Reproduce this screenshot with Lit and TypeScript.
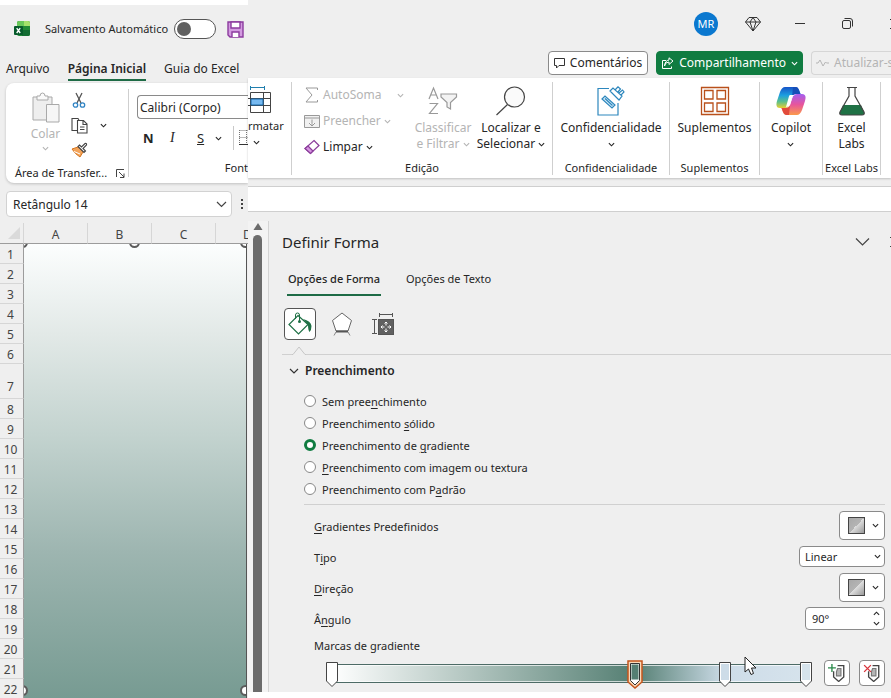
import { LitElement, html, css, svg } from "lit";
import { customElement, state } from "lit/decorators.js";
import { styleMap } from "lit/directives/style-map.js";
import { classMap } from "lit/directives/class-map.js";

const base = css`
  * { box-sizing: border-box; }
  :host { font-family: "Noto Sans", "Open Sans", sans-serif; font-size: 12px; line-height: 16px; color: #262626; }
  button, input, select { font: inherit; color: inherit; margin: 0; }
  button { display: inline-flex; align-items: center; justify-content: center; padding: 0; border: 0; background: none; white-space: nowrap; }
  button:disabled { color: #b4b4b4; }
  svg { display: block; flex: none; fill: none; }
`;

const chevron = (w = 7) => svg`<svg width=${w} height=${w} viewBox="0 0 8 8" stroke="currentColor" stroke-width="1.3"><path d="M1 2.5 4 5.5 7 2.5"/></svg>`;

@customElement("sheet-side")
class SheetSide extends LitElement {
  static styles = [base, css`
    :host { display: flex; flex-direction: column; min-width: 0; overflow: hidden; background: #efefef; border-top: 5px solid #fff; }
    .title { display: flex; align-items: center; justify-content: space-between; height: 48px; padding: 0 4px 0 14px; font-size: 11px; flex: none; }
    .title label { display: flex; align-items: center; gap: 6px; margin-left: 4px; white-space: nowrap; }
    .switch { appearance: none; width: 42px; height: 20px; border: 1px solid #555; border-radius: 10px; background: #fff; display: flex; align-items: center; padding: 0 2px; }
    .switch::before { content: ""; width: 14px; height: 14px; border-radius: 7px; background: #606060; }
    .tabs { display: flex; height: 30px; padding: 6px 4px 2px 6px; gap: 18px; flex: none; }
    .tab { height: 22px; align-items: flex-start; padding-top: 2px; border-bottom: 2px solid transparent; }
    .tab.on { font-weight: 600; border-color: #1e6b46; }
    .card { display: flex; height: 100px; margin-left: 6px; padding: 6px 0; background: #fff; border-radius: 8px 0 0 8px; box-shadow: 0 1px 3px #0003; flex: none; }
    .clip { width: 123px; display: grid; grid-template: 76px 1fr / 58px 1fr; padding-left: 7px; border-right: 1px solid #cfcfcf; }
    .paste { flex-direction: column; justify-content: flex-start; gap: 3px; padding: 3px 0 0 7px; }
    .tools { display: flex; flex-direction: column; align-items: flex-start; gap: 7px; padding: 2px 0 0 0; }
    .tools button { gap: 12px; height: 18px; }
    .foot { grid-column: 1 / 3; display: flex; align-items: center; justify-content: space-between; padding: 0 3px 4px 2px; font-size: 11px; white-space: nowrap; }
    .fonts { flex: 1; display: flex; flex-direction: column; min-width: 0; padding: 6px 0 0 8px; }
    .combo { width: 100%; height: 24px; border: 1px solid #8a8a8a; border-right: 0; border-radius: 4px 0 0 4px; padding: 0 2px; background: #fff; }
    .fmt { display: flex; align-items: center; height: 24px; margin-top: 7px; font-size: 13px; padding-left: 6px; }
    .fmt button { width: 27px; justify-content: flex-start; flex: none; }
    .fmt .more { width: 18px; }
    .rule { width: 1px; height: 24px; background: #c8c8c8; margin: 0 5px 0 0; flex: none; }
    .fmt .b { font-weight: 700; } .i { font-style: italic; font-family: "Liberation Serif", serif; font-size: 14px; } .u { text-decoration: underline; }
    .fontfoot { margin-top: auto; text-align: right; font-size: 11px; padding-bottom: 1px; }
    .name { display: flex; align-items: center; gap: 9px; height: 40px; padding: 2px 4px 0 6px; flex: none; }
    .box { position: relative; flex: 1; display: flex; min-width: 0; }
    .box input { width: 100%; height: 26px; border: 1px solid #d2d2d2; border-radius: 4px; background: #fff; padding: 0 24px 0 6px; }
    .box button { position: absolute; right: 5px; top: 8px; }
    .sheet { position: relative; flex: 1; min-height: 0; overflow: hidden; color: #444; }
    table { width: 280px; table-layout: fixed; border-collapse: separate; border-spacing: 0; }
    th { height: 20px; padding: 0; font-weight: 400; line-height: 16px; border-bottom: 1px solid #d6d6d6; border-right: 1px solid #9c9c9c; vertical-align: bottom; padding-right: 2px; }
    thead th { height: 21px; border-bottom-color: #9c9c9c; border-right-color: #d6d6d6; padding: 0; }
    .corner { width: 24px; }
    .corner svg { margin: 0 0 4px 8px; }
    .tall th { height: 35px; padding-bottom: 3px; }
    .shape { position: absolute; inset: 21px 1px 0 24px; overflow: hidden; border-right: 1px solid #555; background: linear-gradient(#fcfefe, #e2e9e7 20%, #c3d3cf 42%, #9db5b0 68%, #779b92); }
    .dot { position: absolute; width: 11px; height: 11px; border: 2px solid #5c5c5c; border-radius: 6px; background: #fff; }
    .tl { left: -7px; top: -7px; } .tc { left: 50%; margin-left: -6px; top: -7px; } .tr { right: -5px; top: -7px; }
    .bl { left: -7px; bottom: 2px; } .br { right: -5px; bottom: 2px; }
  `];
  render() {
    return html`
      <div class="title">
        <svg width="16" height="16" viewBox="0 0 16 16"><rect x="3" width="13" height="15" rx="2" fill="#218b36"/><path d="M3 2Q3 0 5 0H10V5H3Z" fill="#69c95a"/><path d="M10 0H14Q16 0 16 2V5H10Z" fill="#a5e26b"/><path d="M8 9H16V13Q16 15 14 15H8Z" fill="#126c32"/><rect y="5" width="9" height="9" rx="1" fill="#075b2c"/><path d="m2.7 7.2 3.5 4.8m0-4.8L2.700 12" stroke="#fff" stroke-width="1.4"/></svg>
        <label>Salvamento Automático <input class="switch" type="checkbox" role="switch"></label>
        <button class="save" aria-label="Salvar"><svg width="17" height="17" viewBox="0 0 17 17" stroke="#8c3b9e" stroke-width="1.4"><path d="M1 1H16V16H3L1 14Z" fill="#d39be0"/><path d="M4 1H13V7H4ZM5 16V11H12V16" fill="#fff"/></svg></button>
      </div>
      <nav class="tabs"><button class="tab">Arquivo</button><button class="tab on">Página Inicial</button><button class="tab">Guia do Excel</button></nav>
      <div class="card">
        <div class="clip">
          <button class="paste" disabled>
            <svg width="28" height="31" viewBox="0 0 28 31" stroke="#a9a9a9"><path d="M1 5H20V28H1Z" fill="#eee"/><path d="M5 8V4H8Q8 1 10.500 1T13 4H16V8Z" fill="#fafafa"/><path d="M14.500 12.500H27V30H14.500Z" fill="#f6f6f6"/></svg>
            <span>Colar</span>${chevron()}
          </button>
          <div class="tools">
            <button aria-label="Recortar"><svg width="16" height="17" viewBox="0 0 16 17"><path d="M5 1 10 11M11 1 6 11" stroke="#555" stroke-width="1.300"/><circle cx="4.500" cy="13" r="2.200" stroke="#3184c4" stroke-width="1.300"/><circle cx="11.500" cy="13" r="2.200" stroke="#3184c4" stroke-width="1.300"/></svg></button>
            <button aria-label="Copiar"><svg width="17" height="17" viewBox="0 0 17 17" stroke="#444" stroke-width="1.100"><path d="M6 13.500H1V1.500H7L8 3"/><path d="M6.500 3.500H12.500L16 7V16H6.500ZM12 4V7.500H16M9 10H13.500M9 12.500H13.500"/></svg>${chevron()}</button>
            <button aria-label="Pincel de Formatação"><svg width="17" height="16" viewBox="0 0 17 16"><path d="M1 7 7 5 12 10 9 15Q4 12 1 7Z" fill="#f3a45a" stroke="#d5751f"/><path d="M3 9.500 9 12" stroke="#fff"/><path d="m7 4.500 6 6 1.500-1.500L12 6.500 15.500 3Q16 1 14 1.500L10.500 5 8.500 3Z" fill="#fff" stroke="#444" stroke-width="1.100"/></svg></button>
          </div>
          <div class="foot"><span>Área de Transfer...</span><svg width="9" height="9" viewBox="0 0 9 9" stroke="#444"><path d="M.5 8V.5H8M3 3 8 8M8 4.500V8.500H4"/></svg></div>
        </div>
        <div class="fonts">
          <input class="combo" aria-label="Fonte" value="Calibri (Corpo)">
          <div class="fmt"><button class="b">N</button><button class="i">I</button><button class="u more">S</button><button class="more" aria-label="Mais">${chevron()}</button><i class="rule"></i>
            <svg width="14" height="16" viewBox="0 0 14 16" stroke="#777" stroke-dasharray="1 1"><path d="M.5.5H14M.5 7.500H14M.5 0V15M7.500 0V15"/><path d="M0 14.500H14" stroke="#333" stroke-dasharray="none"/></svg></div>
          <div class="fontfoot">Font</div>
        </div>
      </div>
      <div class="name"><div class="box"><input aria-label="Caixa de nome" value="Retângulo 14"><button aria-label="Abrir nomes"><svg width="11" height="10" viewBox="0 0 11 10" stroke="#444" stroke-width="1.200"><path d="m1 3 4.500 4.500L10 3"/></svg></button></div>
        <svg width="3" height="12" viewBox="0 0 3 12"><path fill="#444" d="M0 1H2V3H0ZM0 5H2V7H0ZM0 9H2V11H0Z"/></svg></div>
      <div class="sheet">
        <table>
          <thead><tr><th class="corner"><svg width="12" height="12" viewBox="0 0 12 12"><path d="M12 0V12H0Z" fill="#dadada"/></svg></th>${["A", "B", "C", "D"].map((c) => html`<th scope="col">${c}</th>`)}</tr></thead>
          <tbody>${Array.from({ length: 22 }, (_, i) => html`<tr class=${classMap({ tall: i === 6 })}><th scope="row">${i + 1}</th></tr>`)}</tbody>
        </table>
        <div class="shape">${["tl", "tc", "tr", "bl", "br"].map((p) => html`<i class="dot ${p}"></i>`)}</div>
      </div>`;
  }
}

@customElement("ribbon-right")
class RibbonRight extends LitElement {
  static styles = [base, css`
    :host { display: block; min-width: 0; background: #efefef; }
    .win { display: flex; height: 47px; align-items: center; justify-content: flex-end; }
    .avatar { width: 24px; height: 24px; border-radius: 12px; background: #0b78cf; color: #fff; font-size: 11px; margin-right: 27px; }
    .win .gem { margin-right: 34px; } .win .min { margin-right: 37px; } .win .max { margin-right: 37px; }
    .close { width: 1px; overflow: hidden; justify-content: flex-start; }
    .acts { display: flex; justify-content: flex-end; gap: 8px; height: 31px; padding-top: 4px; overflow: hidden; }
    .acts button { height: 24px; border: 1px solid #8a8a8a; border-radius: 4px; background: #fff; padding: 0 5px; gap: 5px; flex: none; }
    .acts .share { background: #107c41; color: #fff; border-color: #107c41; padding: 0 4px; }
    .acts .upd { background: none; border-color: #d6d6d6; border-right: 0; border-radius: 4px 0 0 4px; width: 80px; justify-content: flex-start; overflow: hidden; padding: 0 4px; }
    .ribbon { display: flex; height: 100px; padding: 4px 0 3px; background: #fff; box-shadow: 0 1px 2px #0003; overflow: hidden; position: relative; }
    .group { display: flex; flex-direction: column; flex: none; border-right: 1px solid #cfcfcf; }
    .body { display: flex; flex: 1; justify-content: center; align-items: flex-start; padding-top: 4px; }
    .foot { text-align: center; font-size: 11px; white-space: nowrap; line-height: 14px; }
    .big { flex-direction: column; }
    .big svg.art { margin-bottom: 4px; }
    .line { display: flex; align-items: center; gap: 3px; min-height: 16px; font-size: 12px; }
    .small { font-size: 11px; }
    .fmt { width: 44px; } .fmt .body { justify-content: flex-start; }
    .fmt .big { align-items: flex-start; }
    .fmt .chev { padding-left: 5px; }
    .fmt .art { margin-bottom: 6px; }
    .edit { width: 261px; } .conf { width: 117px; } .sup { width: 90px; } .cop { width: 63px; } .labs { width: 58px; }
    .edit .body { justify-content: flex-start; padding-left: 12px; }
    .list { display: flex; flex-direction: column; align-items: flex-start; width: 112px; }
    .list button { height: 26px; gap: 3px; }
    .list button.auto { width: 100px; justify-content: flex-start; height: 18px; margin-bottom: 4px; }
    .auto span { flex: 1; text-align: left; }
    .sort { width: 54px; } .find { width: 74px; margin-left: 4px; }
    .bar { height: 26px; margin-top: 8px; background: #fff; border: 1px solid #cfcfcf; border-left: 0; border-right: 0; }
    .bar input { width: 100%; height: 24px; border: 0; padding: 0 8px; background: none; display: block; outline: 0; }
  `];
  render() {
    return html`
      <div class="win">
        <button class="avatar" aria-label="Conta">MR</button>
        <button class="gem" aria-label="Premium"><svg width="16" height="16" viewBox="0 0 16 16" stroke="#333"><path d="M4 1.500H12L15.500 6 8 15 .5 6ZM.5 6H15.500M8 1.500 5 6 8 15 11 6Z"/></svg></button>
        <button class="min" aria-label="Minimizar"><svg width="10" height="11" viewBox="0 0 10 11" stroke="#333"><path d="M0 5.500H10"/></svg></button>
        <button class="max" aria-label="Restaurar"><svg width="11" height="11" viewBox="0 0 11 11" stroke="#333"><rect x=".5" y="2.500" width="8" height="8" rx="1.500"/><path d="M2.500 .5H8Q10.500 .5 10.500 3V8.500"/></svg></button>
        <button class="close" aria-label="Fechar"><svg width="10" height="10" viewBox="0 0 10 10" stroke="#333"><path d="M0 0 10 10M10 0 0 10"/></svg></button>
      </div>
      <div class="acts">
        <button><svg width="11" height="12" viewBox="0 0 11 12" stroke="#333"><path d="M.5 1.500H10.500V8.500H5L2.500 11V8.500H.5Z"/></svg>Comentários</button>
        <button class="share"><svg width="13" height="13" viewBox="0 0 13 13" stroke="#fff"><path d="M5 3.500H1.500V11.500H10.500V9.500M3.500 9Q4 5 8 5V7.500L12 4 8 .8V3Q4 3.500 3.500 9Z"/></svg>Compartilhamento ${chevron()}</button>
        <button class="upd" disabled><svg width="13" height="10" viewBox="0 0 13 10" stroke="#b4b4b4"><path d="M0 5H2L4 2 7 8 9.500 4 10.500 5H13"/></svg>Atualizar-se</button>
      </div>
      <div class="ribbon">
        <section class="group fmt"><div class="body"><button class="big">
          <svg class="art" width="24" height="28" viewBox="0 0 24 28" stroke="#444"><path d="M2 1.500H17M2.500 0V4M16.500 0V4" stroke="#217fae"/><path d="M2.500 6.500H22.500V26.500H2.500ZM15.500 6.500V26.500M0 12.500H22.500M0 19.500H22.500"/><path d="M3 13H15V19H3Z" fill="#76b9f0" stroke="#1768ab"/></svg>
          <span class="line small">rmatar</span><span class="line chev">${chevron()}</span></button></div></section>
        <section class="group edit"><div class="body">
          <div class="list">
            <button class="auto" disabled><svg width="16" height="16" viewBox="0 0 16 16" stroke="#999"><path d="M13.500 3V1H2L8 8 2 15H13.500V13"/></svg><span>AutoSoma</span>${chevron()}</button>
            <button disabled><svg width="16" height="15" viewBox="0 0 16 15" stroke="#999"><path d="M.5 1.500H15.500V13.500H.5ZM.5 4H15.500M8 5.500V11.500M5 9 8 12 11 9" fill="#f1f1f1"/></svg><span>Preencher</span>${chevron()}</button>
            <button><svg width="16" height="16" viewBox="0 0 16 16" stroke="#8b3d9b" stroke-width="1.200"><path d="M10 1.500 15 6.500 6.500 14.500 1 9.500Z" fill="#fff"/><path d="M4 7 9 12 6.500 14.500 1 9.500Z" fill="#d796e2"/></svg><span>Limpar</span>${chevron()}</button>
          </div>
          <button class="big sort" disabled><svg class="art" width="30" height="30" viewBox="0 0 30 30" stroke="#999" stroke-width="1.200"><path d="M1 13 5.500 2 10 13M2.500 9H8.500M1.500 17.500H9.500L1.500 27.500H10"/><path d="M13 8H28.500V11L22.500 16.500V23L19 21V16.500L13 11Z" fill="#f3f3f3"/></svg><span class="line">Classificar</span><span class="line">e Filtrar ${chevron()}</span></button>
          <button class="big find"><svg class="art" width="30" height="30" viewBox="0 0 30 30" stroke="#444" stroke-width="1.200"><circle cx="18.500" cy="11" r="10" fill="#fafafa"/><path d="M11.500 18.500.5 29"/></svg><span class="line">Localizar e</span><span class="line">Selecionar ${chevron()}</span></button>
        </div><div class="foot">Edição</div></section>
        <section class="group conf"><div class="body"><button class="big">
          <svg class="art" width="28" height="30" viewBox="0 0 28 30" stroke="#2d87bd" stroke-width="1.200"><path d="M12 2.500H1V29H21V17"/><path d="m5 13 3-3 10 9-3 3ZM8 12.500 15.500 19.500" fill="#d6ecfa"/><path d="m13 5 3-3 9 8-3 4ZM18 4 21 .8 23.500 3 20.500 6.500M22 7 25.500 4 27 6 23.500 9.500" fill="#fff"/></svg>
          <span class="line">Confidencialidade</span><span class="line">${chevron()}</span></button></div><div class="foot">Confidencialidade</div></section>
        <section class="group sup"><div class="body"><button class="big">
          <svg class="art" width="30" height="30" viewBox="0 0 30 30" stroke="#b9501b" stroke-width="1.300"><path d="M1.500 1.500H28.500V28.500H1.500ZM4.500 4.500H13V13H4.500ZM17 4.500H25.500V13H17ZM4.500 17H13V25.500H4.500ZM17 17H25.500V25.500H17Z"/></svg>
          <span class="line">Suplementos</span></button></div><div class="foot">Suplementos</div></section>
        <section class="group cop"><div class="body"><button class="big">
          <svg class="art" width="30" height="30" viewBox="0 0 30 30">
            <defs>
              <linearGradient id="a" x1="0" y1="0" x2="0" y2="1"><stop stop-color="#1754c8"/><stop offset=".4" stop-color="#1c9fe0"/><stop offset=".7" stop-color="#5cc08c"/><stop offset="1" stop-color="#e8cf31"/></linearGradient>
              <linearGradient id="b" x1="0" y1="0" x2="0" y2="1"><stop stop-color="#a45ff0"/><stop offset=".5" stop-color="#e7559c"/><stop offset="1" stop-color="#fb9a4a"/></linearGradient>
            </defs>
            <path d="M9 1H20Q22 1 23 4L24.500 8H20Q17 8 16 11L13 20Q12 22 9 22H4Q-1 22 1 15L4 6Q6 1 9 1Z" fill="url(#a)"/>
            <path d="M17 1H20Q22 1 23 4L24.500 8H20Q17 8 16 11Z" fill="#164fb8"/>
            <path d="M21 29H10Q8 29 7 26L5.500 22H10Q13 22 14 19L17 10Q18 8 21 8H26Q31 8 29 15L26 24Q24 29 21 29Z" fill="url(#b)"/>
            <path d="M13 29H10Q8 29 7 26L5.500 22H10Q13 22 14 19Z" fill="#e24b3c"/>
            <path d="M14 9H19Q17 9 16 12L14 19Q13 21 10 21L12.500 12Q13 9 14 9Z" fill="#fff"/>
          </svg>
          <span class="line">Copilot</span><span class="line">${chevron()}</span></button></div></section>
        <section class="group labs"><div class="body"><button class="big">
          <svg class="art" width="26" height="30" viewBox="0 0 26 30"><path d="M4 19H22L25 26Q26 29 23 29H3Q0 29 1 26Z" fill="#1f7145"/><path d="M8 1.500H18M10 1.500V10L1 26Q0 29 3 29H23Q26 29 25 26L16 10V1.500" stroke="#444" stroke-width="1.200"/></svg>
          <span class="line">Excel</span><span class="line">Labs</span></button></div><div class="foot">Excel Labs</div></section>
      </div>
      <div class="bar"><input aria-label="Barra de fórmulas"></div>`;
  }
}

@customElement("format-pane")
class FormatPane extends LitElement {
  @state() private fill = 2;
  private fills = [
    html`Sem pree<u>n</u>chimento`, html`Preenchimento <u>s</u>ólido`, html`Preenchimento de <u>g</u>radiente`,
    html`<u>P</u>reenchimento com imagem ou textura`, html`Preenchimento com P<u>a</u>drão`,
  ];
  private stops = [
    { at: 0, color: "#ffffff" }, { at: 64, color: "#557f73", on: true },
    { at: 83, color: "#cddce8" }, { at: 100, color: "#d6e3ec" },
  ];
  static styles = [base, css`
    :host { display: flex; flex: 1; min-height: 0; background: #efefef; border-bottom: 6px solid #fff; font-size: 11px; }
    .scroll { width: 21px; margin-top: 9px; border-right: 1px solid #d4d4d4; display: flex; flex-direction: column; align-items: center; gap: 5px; padding: 2px 1px 0 0; background: #f3f3f3; flex: none; }
    .thumb { width: 9px; flex: 1; background: #6c6c6c; border-radius: 5px 5px 0 0; }
    .pane { flex: 1; min-width: 0; padding: 19px 0 0 13px; }
    .head { display: flex; align-items: center; height: 22px; }
    h2 { margin: 0; font-size: 15px; line-height: 22px; font-weight: 400; flex: 1; }
    .head .x { width: 1px; overflow: hidden; justify-content: flex-start; margin-left: 20px; }
    .tabs { display: flex; gap: 25px; margin: 13px 0 0 5px; }
    .tabs button { height: 30px; border-bottom: 2px solid transparent; padding-bottom: 2px; }
    .tabs .on { border-color: #1e6b46; font-weight: 500; padding: 0 1px 2px; }
    .cats { display: flex; align-items: center; gap: 15px; margin: 12px 0 0 2px; }
    .cats .size { margin-left: 4px; }
    .cats .on { width: 32px; height: 32px; border: 1px solid #555; border-radius: 4px; background: #fff; }
    .notch { display: flex; align-items: flex-end; height: 15px; }
    .notch::before, .notch::after { content: ""; width: 10px; height: 1px; background: #d0d0d0; }
    .notch::after { flex: 1; }
    .sec { display: flex; align-items: center; gap: 6px; height: 32px; padding-left: 7px; }
    h3 { margin: 0; font-size: 12px; font-weight: 600; }
    .form { padding: 4px 6px 0 22px; }
    fieldset { border: 0; margin: 0; padding: 0 0 3px; border-bottom: 1px solid #d0d0d0; min-width: 0; }
    .radio { display: flex; height: 22px; gap: 6px; align-items: center; }
    .radio input { appearance: none; width: 12px; height: 12px; border: 1px solid #888; border-radius: 6px; background: #fff; flex: none; margin-bottom: 3px; }
    .radio input:checked { border: 3px solid #107c41; }
    u { text-underline-offset: 2px; }
    .row { display: flex; align-items: center; justify-content: space-between; height: 31px; padding-left: 10px; }
    .row label { padding-top: 2px; }
    .rows { padding-top: 5px; }
    .pick { width: 46px; height: 29px; border: 1px solid #8a8a8a; border-radius: 4px; background: #fff; gap: 7px; padding-left: 2px; }
    .sw { width: 17px; height: 17px; border: 1px solid #444; background: linear-gradient(135deg, #a8a8a8, #b4b4b4 50%, #ddd 50%, #999); }
    .field { position: relative; display: flex; }
    .field select { appearance: none; width: 86px; height: 21px; border: 1px solid #8a8a8a; border-radius: 4px; background: #fff; padding: 0 5px; }
    .field .ch { position: absolute; right: 4px; top: 7px; pointer-events: none; }
    .field input { width: 80px; height: 23px; border: 1px solid #8a8a8a; border-radius: 4px; background: #fff; padding: 0 6px; }
    .spin { position: absolute; right: 5px; top: 3px; display: flex; flex-direction: column; gap: 3px; }
    .up { transform: rotate(180deg); }
    .mark { height: 23px; padding-left: 10px; line-height: 24px; }
    .grad { display: flex; align-items: center; gap: 9px; height: 32px; padding-left: 27px; }
    .track { position: relative; flex: 1; height: 19px; margin-right: 8px; border: 1px solid #4d6b66; background: linear-gradient(90deg, #fff, #557f73 64%, #cddce8 83%, #d6e3ec); box-shadow: inset 0 0 0 1px #ffffffb0; }
    .stop { position: absolute; top: -3px; margin-left: -6px; }
    .stop.on { top: -5px; margin-left: -8px; }
    .act { width: 26px; height: 26px; border: 1px solid #8a8a8a; border-radius: 4px; background: #fff; flex: none; }
    .mouse { position: absolute; left: 87%; top: -9px; }
  `];
  private stop(s: { at: number; color: string; on?: boolean }) {
    return s.on
      ? html`<button class="stop on" aria-label="Marca selecionada" style=${styleMap({ left: `${s.at}%` })}><svg width="16" height="29" viewBox="0 0 16 29"><path d="M1 1H15V22L8 28 1 22Z" fill="#f9d9b9" stroke="#c5561c" stroke-width="1.500"/><path d="M3.500 3.500H12.500V20.500L8 25 3.500 20.500Z" fill="#fff" stroke="#333"/><path d="M4.500 4.500H11.500V19.500H4.500Z" fill=${s.color}/></svg></button>`
      : html`<button class="stop" aria-label="Marca de gradiente" style=${styleMap({ left: `${s.at}%` })}><svg width="12" height="25" viewBox="0 0 12 25"><path d="M.5 .5H11.500V19L6 24.500 .5 19Z" fill="#fff" stroke="#444"/><path d="M2 2H10V18H2Z" fill=${s.color}/></svg></button>`;
  }
  render() {
    const tag = svg`<path d="M8.500 1.500H14V11.500L9.500 15.500 5 11.500V6.500" stroke="#444" stroke-width="1.200" fill="#fff"/><path d="M8.500 4H11.500V10.500H7.500V7Z" fill="#b5b5b5" stroke="#777"/>`;
    return html`
      <div class="scroll"><svg width="10" height="7" viewBox="0 0 10 7"><path d="M5 0 9.500 7H.5Z" fill="#6c6c6c"/></svg><div class="thumb"></div></div>
      <div class="pane">
        <div class="head"><h2>Definir Forma</h2><button aria-label="Opções do painel"><svg width="15" height="10" viewBox="0 0 15 10" stroke="#444" stroke-width="1.200"><path d="m1 1.500 6.500 6.500L14 1.500"/></svg></button><button class="x" aria-label="Fechar painel"><svg width="10" height="10" viewBox="0 0 10 10" stroke="#444"><path d="M0 0 10 10M10 0 0 10"/></svg></button></div>
        <div class="tabs"><button class="on">Opções de Forma</button><button>Opções de Texto</button></div>
        <div class="cats">
          <button class="on" aria-label="Preenchimento e Linha"><svg width="24" height="24" viewBox="0 0 24 24"><path d="M10 3.500 20 12.500 10.500 22 1 12.500Z" stroke="#1e7045" stroke-width="1.200"/><path d="M7.500 7V3Q7.500 1 9.500 1T11.500 3V9.500" stroke="#1e7045"/><circle cx="11.500" cy="9.500" r="1.500" fill="#1e7045"/><path d="M15 7Q23 9 23.500 14 23.500 18 21.500 20 20 18 20 13Z" fill="#1e7045"/></svg></button>
          <button aria-label="Efeitos"><svg width="22" height="24" viewBox="0 0 22 24"><path d="M11 1 20.500 8.500 17 19H5L1.500 8.500Z" fill="#fff" stroke="#666"/><path d="M5 19.500H17" stroke="#555" stroke-width="2"/><path d="M5 20 3 23.500M17 20 19 23.500" stroke="#888"/></svg></button>
          <button class="size" aria-label="Tamanho e Propriedades"><svg width="22" height="22" viewBox="0 0 22 22" stroke="#555"><path d="M7 1.500H21M7.500 0V4M20.500 0V4M2.500 7V20.500M0 6.500H5M0 20.500H5"/><rect x="6.500" y="6.500" width="15" height="15" fill="#606060"/><path d="M14 9V12.500M14 15.500V19M9 14H12.500M15.500 14H19M12.500 10.500 14 9 15.500 10.500M12.500 17.500 14 19 15.500 17.500M10.500 12.500 9 14 10.500 15.500M17.500 12.500 19 14 17.500 15.500" stroke="#fff"/></svg></button>
        </div>
        <div class="notch"><svg width="14" height="9" viewBox="0 0 14 9" stroke="#c6c6c6"><path d="M0 8.500H1L7 1 13 8.500H14"/></svg></div>
        <div class="sec"><svg width="10" height="8" viewBox="0 0 10 8" stroke="#333" stroke-width="1.200"><path d="m1 2 4 4 4-4"/></svg><h3>Preenchimento</h3></div>
        <div class="form">
          <fieldset>${this.fills.map((f, i) => html`<label class="radio"><input type="radio" name="fill" .checked=${this.fill === i} @change=${() => (this.fill = i)}><span>${f}</span></label>`)}</fieldset>
          <div class="rows">
            <div class="row"><label for="preset"><u>G</u>radientes Predefinidos</label><button id="preset" class="pick"><i class="sw"></i>${chevron()}</button></div>
            <div class="row"><label for="type">T<u>i</u>po</label><span class="field"><select id="type"><option>Linear</option></select><span class="ch">${chevron()}</span></span></div>
            <div class="row"><label for="dir"><u>D</u>ireção</label><button id="dir" class="pick"><i class="sw"></i>${chevron()}</button></div>
            <div class="row"><label for="angle">Â<u>n</u>gulo</label><span class="field"><input id="angle" value="90°"><span class="spin"><button class="up" aria-label="Aumentar">${chevron()}</button><button aria-label="Diminuir">${chevron()}</button></span></span></div>
          </div>
          <div class="mark">Marcas de gradiente</div>
          <div class="grad">
            <div class="track">${this.stops.map((s) => this.stop(s))}
              <svg class="mouse" width="13" height="20" viewBox="0 0 13 20"><path d="M1 1V16L4.500 13 7 18.500 9.500 17.500 7.500 12H12Z" fill="#fff" stroke="#222"/></svg></div>
            <button class="act" aria-label="Adicionar marca"><svg width="18" height="18" viewBox="0 0 16 16">${tag}<path d="M3.500 0V7M0 3.500H7" stroke="#2b8a4b" stroke-width="1.200"/></svg></button>
            <button class="act" aria-label="Remover marca"><svg width="18" height="18" viewBox="0 0 16 16">${tag}<path d="M1 1 7 7M7 1 1 7" stroke="#d9343c" stroke-width="1.200"/></svg></button>
          </div>
        </div>
      </div>`;
  }
}

@customElement("app-root")
class AppRoot extends LitElement {
  static styles = css`
    :host { display: grid; grid-template-columns: 248px minmax(0, 1fr); height: 100vh; overflow: hidden; }
    .main { display: flex; flex-direction: column; min-width: 0; }
  `;
  render() {
    return html`<sheet-side></sheet-side><div class="main"><ribbon-right></ribbon-right><format-pane></format-pane></div>`;
  }
}
